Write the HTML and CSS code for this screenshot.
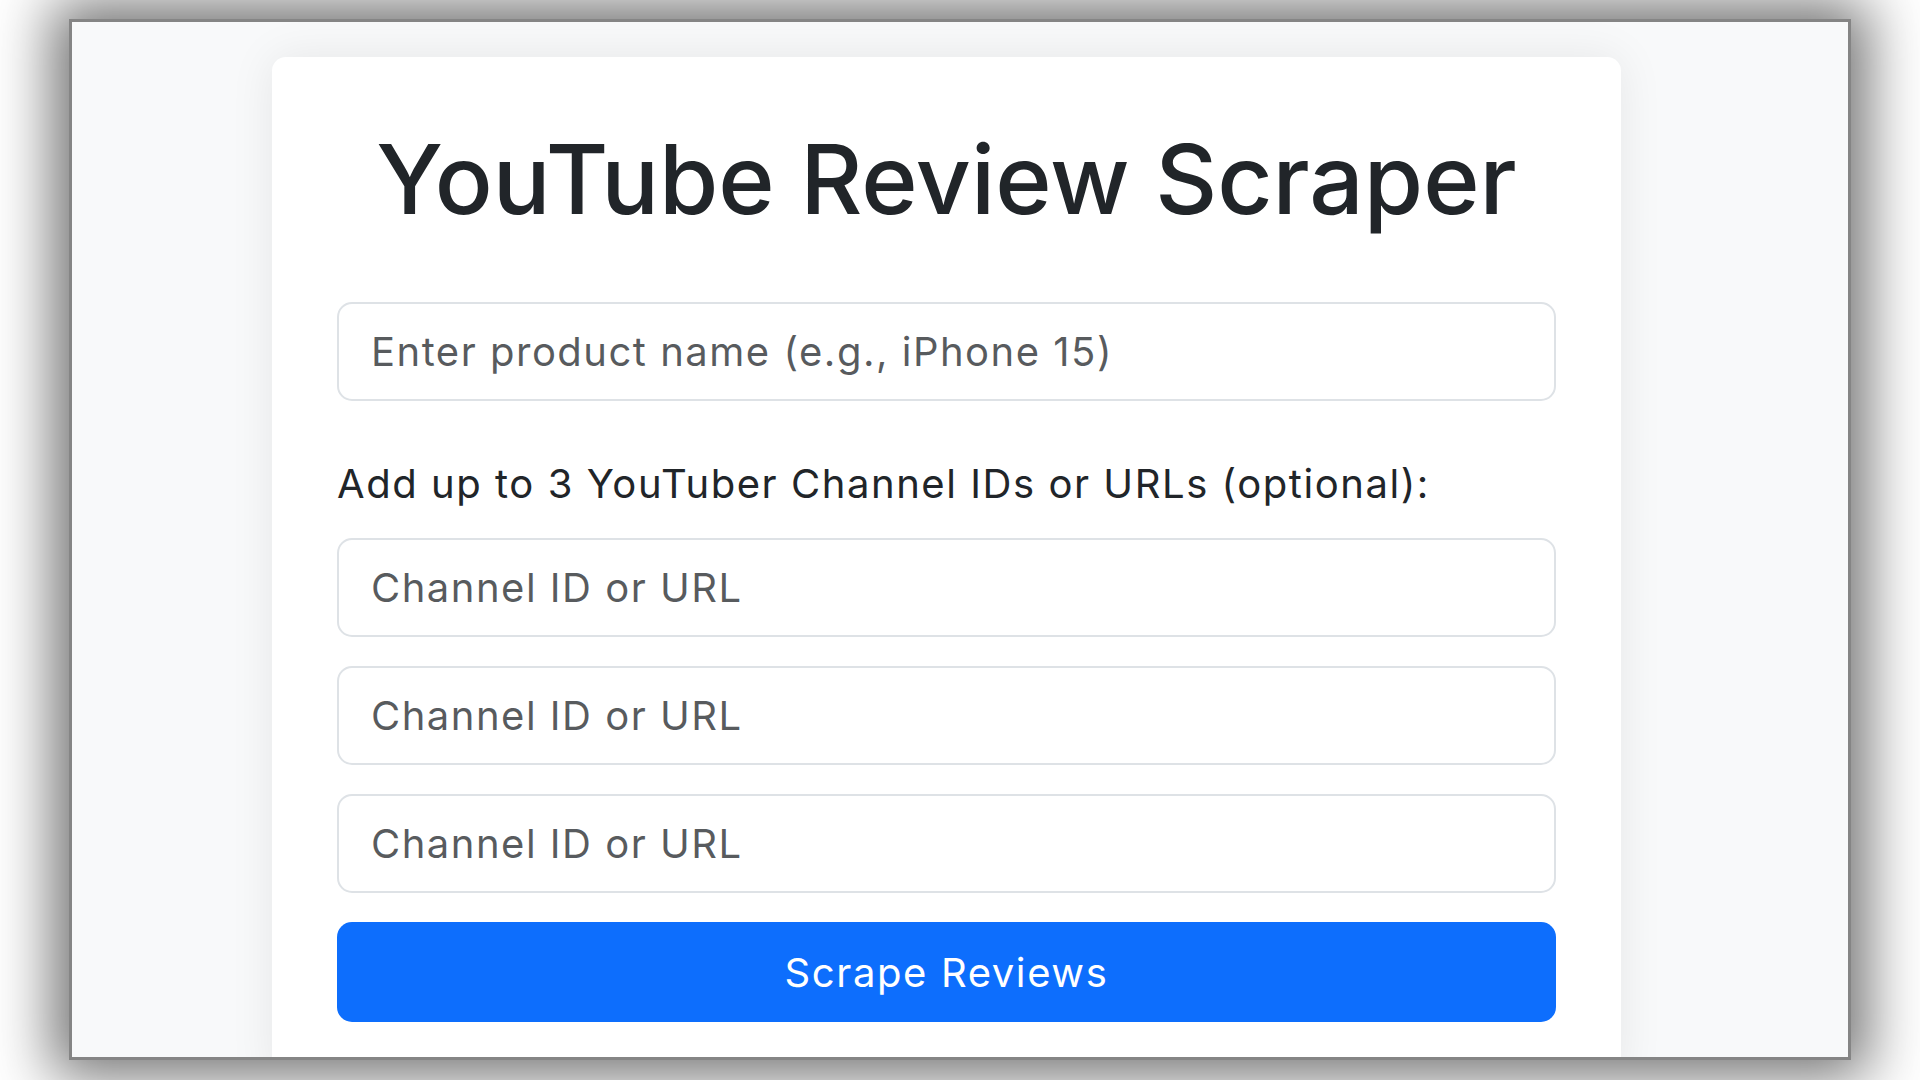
FILE: index.html
```html
<!DOCTYPE html>
<html lang="en">
<head>
<meta charset="utf-8">
<title>YouTube Review Scraper</title>
<link rel="stylesheet" href="styles.css">
</head>
<body>
<div class="screen">
  <main class="card">
    <h1 class="title">YouTube Review Scraper</h1>
    <input class="field" type="text" placeholder="Enter product name (e.g., iPhone 15)">
    <label class="label">Add up to 3 YouTuber Channel IDs or URLs (optional):</label>
    <div class="channels">
      <input class="field" type="text" placeholder="Channel ID or URL">
      <input class="field" type="text" placeholder="Channel ID or URL">
      <input class="field" type="text" placeholder="Channel ID or URL">
      <button class="btn" type="button">Scrape Reviews</button>
    </div>
  </main>
</div>
</body>
</html>
```
FILE: styles.css
```css
html, body {
  margin: 0;
  height: 100%;
}
body {
  background: #ffffff;
  padding: 22px 72px 23px 72px;
  box-sizing: border-box;
  overflow: hidden;
  font-family: Inter, "Liberation Sans", sans-serif;
}
.screen {
  width: 1776px;
  height: 1035px;
  background: #f8f9fa;
  overflow: hidden;
  box-shadow: 0 0 0 3px #858585, 0 0 55px 20px rgba(0,0,0,0.55);
  padding-top: 35px;
  box-sizing: border-box;
}
.card {
  margin-left: 200px;
  width: 1349px;
  box-sizing: border-box;
  background: #ffffff;
  border-radius: 14px;
  box-shadow: 0 0 45px rgba(0,0,0,0.08);
  padding: 64px 65px 60px 65px;
  display: flex;
  flex-direction: column;
}
.title {
  margin: 0 0 65px 0;
  text-align: center;
  font-weight: 500;
  font-size: 96px;
  line-height: 116px;
  color: #212529;
}
.field {
  display: block;
  width: 100%;
  height: 99px;
  box-sizing: border-box;
  border: 2.5px solid #dee2e6;
  border-radius: 15px;
  padding: 0 32px;
  font-family: Inter, "Liberation Sans", sans-serif;
  font-size: 40px;
  letter-spacing: 1.5px;
  color: #212529;
  background: #fff;
  outline: none;
}
.field::placeholder {
  color: rgba(33,37,41,0.75);
}
.label {
  display: block;
  margin: 53px 0 24px 0;
  font-size: 40px;
  letter-spacing: 1.55px;
  line-height: 60px;
  color: #212529;
}
.channels {
  display: flex;
  flex-direction: column;
  gap: 29px;
}
.btn {
  width: 100%;
  height: 100px;
  border: none;
  border-radius: 15px;
  background: #0d6efd;
  color: #ffffff;
  font-family: Inter, "Liberation Sans", sans-serif;
  font-size: 40px;
  letter-spacing: 1.6px;
}
```
